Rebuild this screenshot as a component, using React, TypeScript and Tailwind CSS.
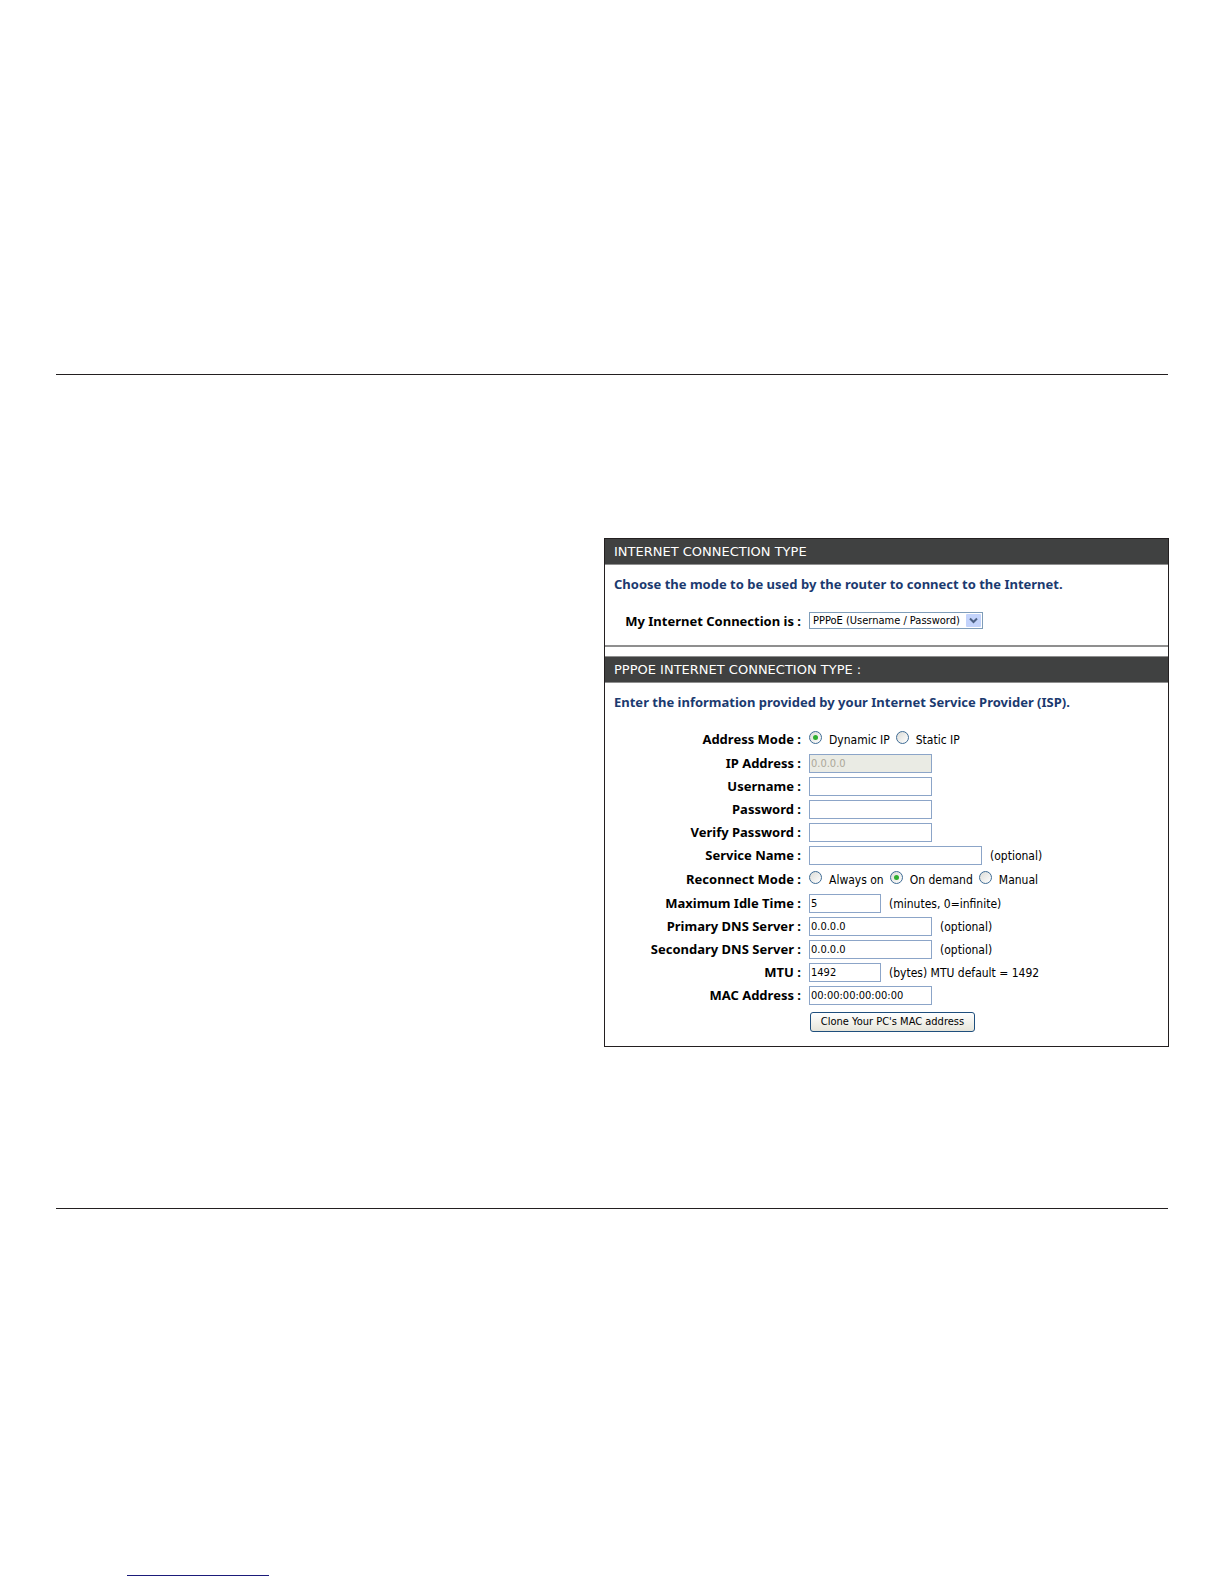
import { useId, useState } from "react";
import type { ReactNode } from "react";

function SectionTitle({ children }: { children: ReactNode }) {
  return (
    <h2 className="h-[26px] border-b border-[#8f8f8f] bg-[#404141] px-[9px] font-['DejaVu_Sans'] text-[13px] leading-[26px] text-white uppercase">
      {children}
    </h2>
  );
}

function Lead({ children }: { children: ReactNode }) {
  return <p className="px-[9px] font-['Noto_Sans'] text-[13px] leading-5 font-bold text-[#1b3a6f]">{children}</p>;
}

const labelClass =
  "w-[196px] shrink-0 text-right font-['Noto_Sans'] text-[13px] leading-[18px] font-bold whitespace-nowrap";

type FieldProps = {
  label: string;
  value?: string;
  size?: "short" | "medium" | "long";
  type?: string;
  note?: string;
  disabled?: boolean;
};

const widths = { short: "w-[72px]", medium: "w-[123px]", long: "w-[173px]" };

function Field({ label, value = "", size = "medium", type = "text", note, disabled }: FieldProps) {
  const id = useId();
  return (
    <div className="flex h-[23px] items-start">
      <label htmlFor={id} className={labelClass}>
        {label} :
      </label>
      <input
        id={id}
        type={type}
        defaultValue={value}
        disabled={disabled}
        className={`${widths[size]} ml-2 h-[19px] shrink-0 rounded-none border border-[#8ca5c8] bg-white px-px text-[11px] text-black disabled:bg-[#eaebe4] disabled:text-[#aca899]`}
      />
      {note && <span className="ml-2 text-[12px] leading-5 whitespace-nowrap">{note}</span>}
    </div>
  );
}

function RadioRow({ label, name, options, initial }: { label: string; name: string; options: string[]; initial: string }) {
  const [selected, setSelected] = useState(initial);
  return (
    <div role="radiogroup" aria-label={label} className="flex h-[25px] items-start pt-px">
      <span className={labelClass}>{label} :</span>
      <div className="ml-2 flex gap-1.5">
        {options.map((option) => (
          <label key={option} className="flex items-start gap-[7px] text-[12px] leading-5 whitespace-nowrap">
            <input
              type="radio"
              name={name}
              checked={selected === option}
              onChange={() => setSelected(option)}
              className="mt-px grid size-[13px] shrink-0 appearance-none place-items-center rounded-full border border-[#3f6c95] bg-linear-to-br from-[#dcdcd7] to-white checked:before:size-[5px] checked:before:rounded-full checked:before:bg-[#2fae2f]"
            />
            {option}
          </label>
        ))}
      </div>
    </div>
  );
}

export default function App() {
  return (
    <main className="flex min-h-screen flex-col bg-white px-14 pt-[374px] font-['DejaVu_Sans_Condensed','DejaVu_Sans',sans-serif] text-black">
      <hr className="border-t border-[#231f20]" />
      <form
        onSubmit={(event) => event.preventDefault()}
        className="mt-[163px] -mr-px ml-auto w-full max-w-[565px] border border-[#231f20]"
      >
        <section className="border-b-2 border-[#8f8f8f] pb-[15px]">
          <SectionTitle>Internet Connection Type</SectionTitle>
          <div className="mt-[9px]">
            <Lead>Choose the mode to be used by the router to connect to the Internet.</Lead>
          </div>
          <div className="mt-[18px] flex items-start">
            <label htmlFor="connection" className={labelClass}>
              My Internet Connection is :
            </label>
            <div className="relative ml-2">
              <select
                id="connection"
                className="block h-[17px] w-[174px] appearance-none rounded-none border border-[#7f9db9] bg-white pr-4 pl-[3px] text-[11px] leading-[15px]"
              >
                <option>PPPoE (Username / Password)</option>
              </select>
              <svg viewBox="0 0 15 13" className="pointer-events-none absolute top-[2px] right-[2px] h-[13px] w-[15px]" aria-hidden="true">
                <rect width="15" height="13" rx="1" fill="#c3d3fb" />
                <path d="M4 4.5 7.5 8 11 4.5" fill="none" stroke="#4d6185" strokeWidth="2" />
              </svg>
            </div>
          </div>
        </section>
        <section className="mt-[9px] pb-[14px]">
          <div className="border-t border-[#8f8f8f]">
            <SectionTitle>PPPoE Internet Connection Type :</SectionTitle>
          </div>
          <div className="mt-[9px]">
            <Lead>Enter the information provided by your Internet Service Provider (ISP).</Lead>
          </div>
          <div className="mt-[17px]">
            <RadioRow label="Address Mode" name="address" options={["Dynamic IP", "Static IP"]} initial="Dynamic IP" />
            <Field label="IP Address" value="0.0.0.0" disabled />
            <Field label="Username" />
            <Field label="Password" type="password" />
            <Field label="Verify Password" type="password" />
            <Field label="Service Name" size="long" note="(optional)" />
            <RadioRow label="Reconnect Mode" name="reconnect" options={["Always on", "On demand", "Manual"]} initial="On demand" />
            <Field label="Maximum Idle Time" value="5" size="short" note="(minutes, 0=infinite)" />
            <Field label="Primary DNS Server" value="0.0.0.0" note="(optional)" />
            <Field label="Secondary DNS Server" value="0.0.0.0" note="(optional)" />
            <Field label="MTU" value="1492" size="short" note="(bytes) MTU default = 1492" />
            <Field label="MAC Address" value="00:00:00:00:00:00" />
          </div>
          <button
            type="button"
            className="mt-[3px] ml-[205px] block h-5 w-[165px] rounded-[3px] border border-[#1f4f7d] bg-linear-to-b from-white to-[#e6e5da] text-[11px] leading-[18px] whitespace-nowrap"
          >
            Clone Your PC's MAC address
          </button>
        </section>
      </form>
      <hr className="mt-[161px] border-t border-[#231f20]" />
      <footer className="mt-[350px] pl-[71px]">
        <a href="#top" aria-label="Back to top" className="block h-[17px] w-[142px] border-b border-[#1b1b7a]" />
      </footer>
    </main>
  );
}
